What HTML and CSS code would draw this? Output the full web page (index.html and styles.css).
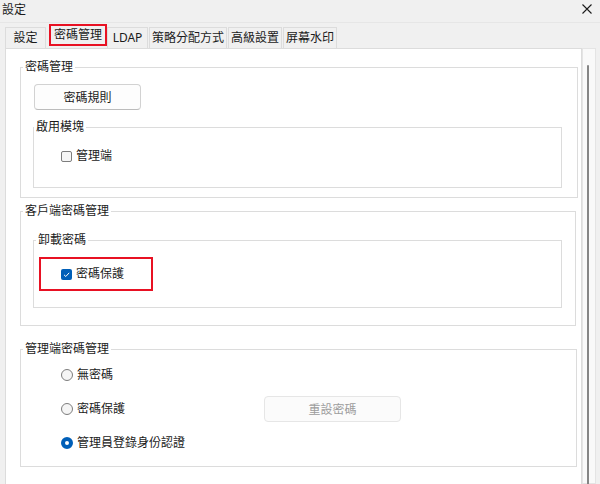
FILE: index.html
```html
<!DOCTYPE html>
<html lang="zh-TW">
<head>
    <meta charset="UTF-8">
    <meta name="viewport" content="width=device-width, initial-scale=1.0">
    <title>設定</title>
    <link rel="stylesheet" href="styles.css">
</head>
<body>
    <div class="titlebar">
        <span class="title">設定</span>
        <span class="close">
            <svg width="10" height="10" viewBox="0 0 10 10"><path d="M0.5 0.5L9.5 9.5M9.5 0.5L0.5 9.5" stroke="#1b1b1b" stroke-width="1.1" fill="none"/></svg>
        </span>
    </div>

    <div class="tabs">
        <div class="tab">設定</div>
        <div class="tab tab-active">密碼管理</div>
        <div class="tab">LDAP</div>
        <div class="tab">策略分配方式</div>
        <div class="tab">高級設置</div>
        <div class="tab">屏幕水印</div>
    </div>

    <div class="body">
        <div class="panel">
            <!-- 密碼管理 -->
            <div class="group group-pwd">
                <div class="group-title">密碼管理</div>
                <button class="btn">密碼規則</button>
                <div class="group inner inner-module">
                    <div class="group-title">啟用模塊</div>
                    <label class="option">
                        <span class="checkbox"></span>
                        <span>管理端</span>
                    </label>
                </div>
            </div>

            <!-- 客戶端密碼管理 -->
            <div class="group group-client">
                <div class="group-title">客戶端密碼管理</div>
                <div class="group inner inner-uninstall">
                    <div class="group-title">卸載密碼</div>
                    <div class="highlight">
                        <label class="option">
                            <span class="checkbox checked">
                                <svg width="11" height="11" viewBox="0 0 11 11"><path d="M3 5.8L4.8 7.5L8.2 3.8" stroke="#fff" stroke-width="1" fill="none"/></svg>
                            </span>
                            <span>密碼保護</span>
                        </label>
                    </div>
                </div>
            </div>

            <!-- 管理端密碼管理 -->
            <div class="group group-admin">
                <div class="group-title">管理端密碼管理</div>
                <div class="radio-list">
                    <label class="radio-row">
                        <span class="radio"></span>
                        <span class="radio-label">無密碼</span>
                    </label>
                    <div class="radio-row">
                        <span class="radio"></span>
                        <span class="radio-label">密碼保護</span>
                        <button class="btn btn-disabled" disabled>重設密碼</button>
                    </div>
                    <label class="radio-row">
                        <span class="radio checked"></span>
                        <span class="radio-label">管理員登錄身份認證</span>
                    </label>
                </div>
            </div>
        </div>
        <div class="scrollbar">
            <div class="thumb"></div>
        </div>
    </div>
</body>
</html>
```

FILE: styles.css
```css
body {
    margin: 0;
    background-color: #f0f0f0;
    font-family: "Noto Sans", "Noto Sans CJK TC", sans-serif;
    font-size: 12px;
    line-height: 16px;
    color: #1b1b1b;
    overflow: hidden;
}
.titlebar {
    height: 23px;
    box-sizing: border-box;
    border-bottom: 1px solid #e6e6e6;
    display: flex;
    justify-content: space-between;
    align-items: flex-start;
    padding: 2px 8px 0 2px;
}
.close {
    margin-top: 2px;
    display: flex;
}
.tabs {
    display: flex;
    align-items: flex-end;
    height: 25px;
    padding-left: 5px;
}
.tab {
    min-width: 41px;
    height: 21px;
    box-sizing: border-box;
    border: 1px solid #dcdcdc;
    border-bottom: none;
    padding: 0 2px;
    line-height: 20px;
    text-align: center;
    margin-right: 1px;
}
.tab-active {
    height: 22px;
    border: 2px solid #e81123;
    line-height: 18px;
    padding: 0 3px;
    margin: 0 0 2px 2px;
}
.body {
    display: flex;
    height: 436px;
}
.panel {
    width: 577px;
    margin-left: 5px;
    box-sizing: border-box;
    background-color: #fff;
    border: 1px solid #dcdcdc;
    border-bottom: none;
}
.scrollbar {
    width: 14px;
    box-sizing: border-box;
    border: 1px solid #e4e4e4;
    background-color: #f9f9f9;
}
.thumb {
    width: 2px;
    height: 420px;
    margin: 16px 0 0 4px;
    background-color: #858585;
    border-radius: 1px;
}
.group {
    border: 1px solid #dcdcdc;
}
.group-title {
    display: table;
    margin: -9px 0 0 2px;
    padding: 0 2px;
    background-color: #fff;
}
.group-pwd {
    margin: 18px 3px 0 14px;
    padding-bottom: 9px;
}
.group-client {
    margin: 13px 5px 0 14px;
    padding-bottom: 17px;
}
.group-admin {
    margin: 23px 4px 0 14px;
}
.inner-module {
    margin: 17px 15px 0 12px;
    padding-bottom: 23px;
}
.inner-module .group-title {
    margin-left: 0;
}
.inner-uninstall {
    margin: 21px 13px 0 12px;
    padding-bottom: 16px;
}
.btn {
    display: block;
    width: 107px;
    height: 26px;
    margin: 9px 0 0 13px;
    border: 1px solid #d2d2d2;
    border-bottom-color: #bcbcbc;
    border-radius: 4px;
    background-color: #fdfdfd;
    font-family: inherit;
    font-size: 12px;
    color: #1b1b1b;
    padding: 0;
}
.btn-disabled {
    width: 137px;
    margin: 0;
    border-color: #e6e6e6;
    background-color: #fbfbfb;
    color: #9d9d9d;
}
.option {
    display: flex;
    align-items: center;
    gap: 4px;
    height: 16px;
}
.inner-module .option {
    margin: 13px 0 0 27px;
}
.checkbox {
    width: 11px;
    height: 11px;
    box-sizing: border-box;
    border: 1px solid #7d7d7d;
    border-radius: 2px;
    background-color: #f6f6f6;
    display: flex;
}
.checkbox.checked {
    border: none;
    background-color: #005fb8;
}
.highlight {
    width: fit-content;
    margin: 9px 0 0 5px;
    padding: 7px 27px 7px 20px;
    border: 2px solid #e81123;
}
.radio-list {
    display: flex;
    flex-direction: column;
    gap: 8px;
    margin-top: 5px;
    padding: 0 0 10px 40px;
}
.radio-row {
    display: flex;
    align-items: center;
    height: 26px;
}
.radio {
    width: 12px;
    height: 12px;
    box-sizing: border-box;
    border: 1px solid #7d7d7d;
    border-radius: 50%;
    background-color: #f5f5f5;
    margin-right: 4px;
}
.radio.checked {
    border: 4px solid #005fb8;
    background-color: #fff;
}
.radio-row .radio-label {
    flex: 0 0 187px;
}
```
